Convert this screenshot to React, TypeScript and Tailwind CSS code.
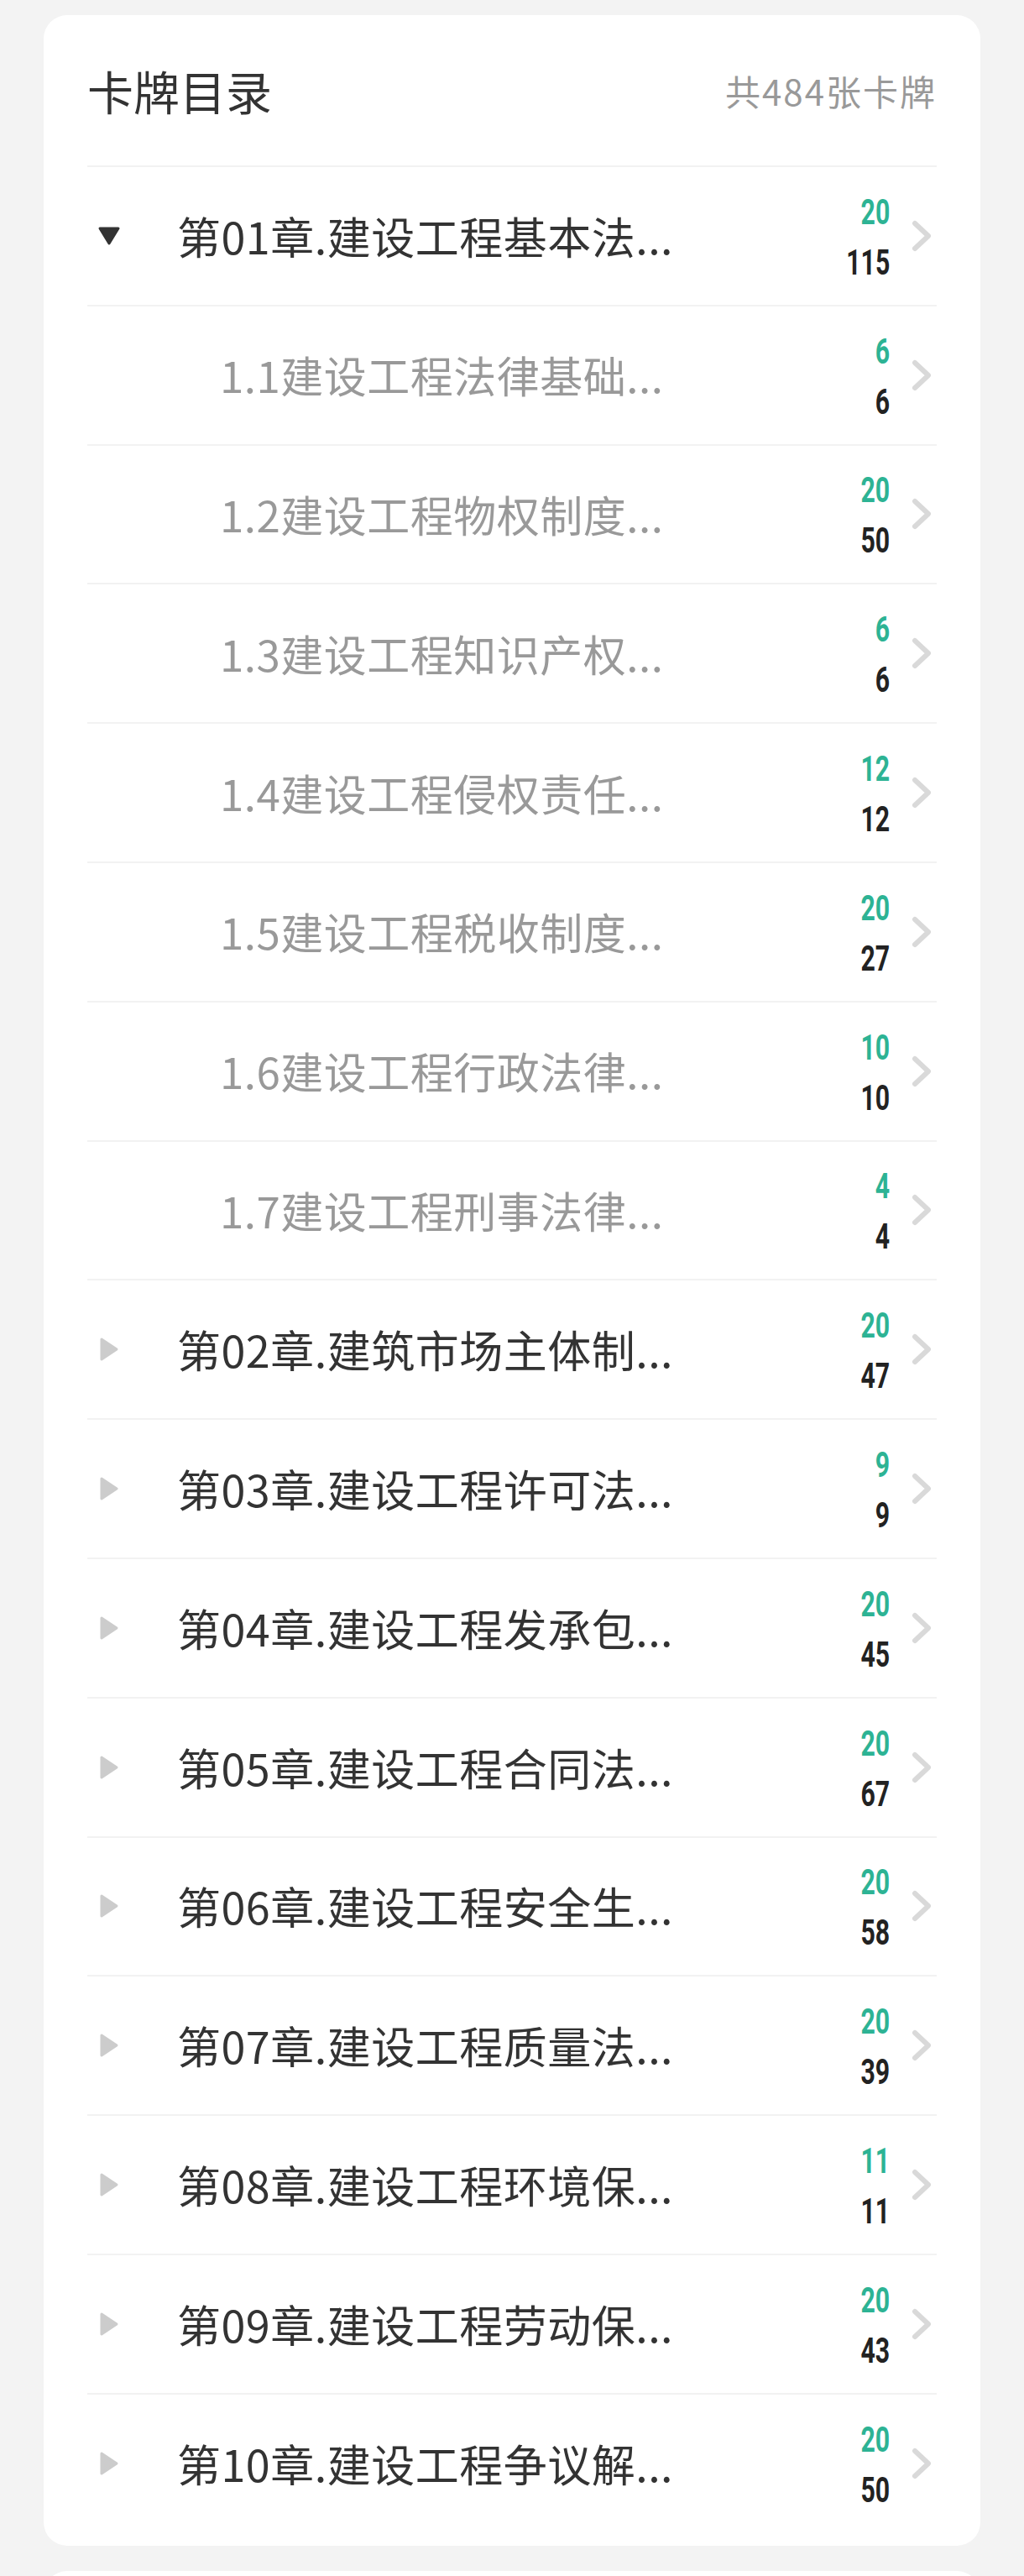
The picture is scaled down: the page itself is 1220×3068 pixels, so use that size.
import React from 'react'

type Row = {
    title: string
    done: number
    total: number
    level: 'chapter' | 'section'
    open?: boolean
}

const rows: Row[] = [
    { title: '第01章.建设工程基本法...', done: 20, total: 115, level: 'chapter', open: true },
    { title: '1.1建设工程法律基础...', done: 6, total: 6, level: 'section' },
    { title: '1.2建设工程物权制度...', done: 20, total: 50, level: 'section' },
    { title: '1.3建设工程知识产权...', done: 6, total: 6, level: 'section' },
    { title: '1.4建设工程侵权责任...', done: 12, total: 12, level: 'section' },
    { title: '1.5建设工程税收制度...', done: 20, total: 27, level: 'section' },
    { title: '1.6建设工程行政法律...', done: 10, total: 10, level: 'section' },
    { title: '1.7建设工程刑事法律...', done: 4, total: 4, level: 'section' },
    { title: '第02章.建筑市场主体制...', done: 20, total: 47, level: 'chapter' },
    { title: '第03章.建设工程许可法...', done: 9, total: 9, level: 'chapter' },
    { title: '第04章.建设工程发承包...', done: 20, total: 45, level: 'chapter' },
    { title: '第05章.建设工程合同法...', done: 20, total: 67, level: 'chapter' },
    { title: '第06章.建设工程安全生...', done: 20, total: 58, level: 'chapter' },
    { title: '第07章.建设工程质量法...', done: 20, total: 39, level: 'chapter' },
    { title: '第08章.建设工程环境保...', done: 11, total: 11, level: 'chapter' },
    { title: '第09章.建设工程劳动保...', done: 20, total: 43, level: 'chapter' },
    { title: '第10章.建设工程争议解...', done: 20, total: 50, level: 'chapter' }
]

function Caret({ open }: { open?: boolean }) {
    if (open) {
        return (
            <svg width="28" height="24" viewBox="0 0 28 24">
                <path
                    d="M3 3 L25 3 L14 21 Z"
                    fill="#333333"
                    stroke="#333333"
                    strokeWidth="3"
                    strokeLinejoin="round"
                />
            </svg>
        )
    }
    return (
        <svg width="24" height="30" viewBox="0 0 24 30">
            <path
                d="M3 3 L21 15 L3 27 Z"
                fill="#cccccc"
                stroke="#cccccc"
                strokeWidth="3"
                strokeLinejoin="round"
            />
        </svg>
    )
}

function Chevron() {
    return (
        <svg width="24" height="38" viewBox="0 0 24 38">
            <polyline
                points="4,4 20,19 4,34"
                fill="none"
                stroke="#d9d9d9"
                strokeWidth="6"
                strokeLinecap="round"
                strokeLinejoin="round"
            />
        </svg>
    )
}

export default function App() {
    const cjk = { fontFamily: '"Noto Sans CJK SC", "Noto Sans", sans-serif' }
    const num = { fontFamily: 'Roboto, "Liberation Sans", sans-serif' }

    return (
        <div className="h-[3068px] overflow-hidden bg-[#f3f3f3] px-[52px] pt-[18px]" style={cjk}>
            <div className="rounded-[28px] bg-white px-[52px] pb-[16px]">

                {/* Header */}
                <div className="flex h-[179px] items-center justify-between">
                    <h1 className="text-[55px] leading-none text-[#333333]">卡牌目录</h1>
                    <span className="text-[42px] leading-none tracking-[2px] text-[#999999]">共484张卡牌</span>
                </div>

                {/* List */}
                <ul>
                    {rows.map((row) => (
                        <li
                            key={row.title}
                            className="flex h-[165.8px] items-center border-t-2 border-[#f2f2f2]"
                        >
                            <div className="flex w-[52px] justify-center">
                                {row.level === 'chapter' && <Caret open={row.open} />}
                            </div>
                            <span
                                className={
                                    row.level === 'chapter'
                                        ? 'ml-[55px] flex-1 text-[52px] leading-none tracking-[0.5px] text-[#333333]'
                                        : 'ml-[106px] flex-1 text-[51px] leading-none tracking-[0.5px] text-[#999999]'
                                }
                            >
                                {row.title}
                            </span>
                            <div
                                className="flex origin-right scale-x-[0.72] flex-col items-end pt-1 font-bold"
                                style={num}
                            >
                                <span className="text-[42px] leading-[60px] text-[#2db394]">{row.done}</span>
                                <span className="text-[42px] leading-[60px] text-[#222222]">{row.total}</span>
                            </div>
                            <div className="ml-[26px] mr-[6px] flex items-center">
                                <Chevron />
                            </div>
                        </li>
                    ))}
                </ul>
            </div>

            <div className="mt-[30px] h-[200px] rounded-t-[28px] bg-white" />
        </div>
    )
}
